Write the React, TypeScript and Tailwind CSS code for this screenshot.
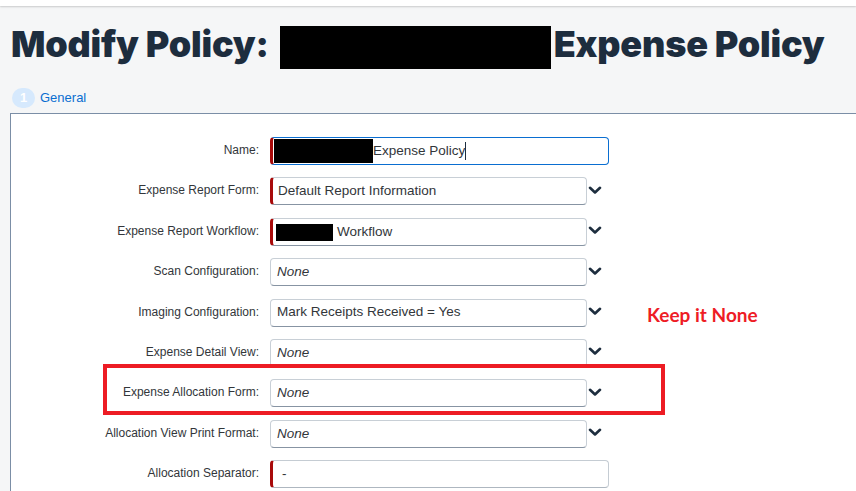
import React from "react";

const Chevron = () => (
  <svg width="14" height="9" viewBox="0 0 14 9" className="shrink-0 -mt-[2px]">
    <polyline points="2,1.8 7,6.5 12,1.8" fill="none" stroke="#1d2d3e" strokeWidth="2.6" strokeLinecap="round" strokeLinejoin="round" />
  </svg>
);

type Row = {
  label: string;
  kind: "name" | "select" | "text";
  required?: boolean;
  content: React.ReactNode;
};

const italicNone = <span className="italic">None</span>;

const rows: Row[] = [
  {
    label: "Name:",
    kind: "name",
    required: true,
    content: (
      <span className="flex items-center">
        <span className="inline-block w-[99px] h-[24px] bg-black" />
        <span>Expense Policy</span>
        <span className="inline-block w-px h-[18px] bg-[#1d2d3e]" />
      </span>
    ),
  },
  { label: "Expense Report Form:", kind: "select", required: true, content: "Default Report Information" },
  {
    label: "Expense Report Workflow:",
    kind: "select",
    required: true,
    content: (
      <span className="flex items-center">
        <span className="inline-block w-[57px] h-[17px] bg-black -ml-[2px] mt-[1px]" />
        <span className="ml-[4px]">Workflow</span>
      </span>
    ),
  },
  { label: "Scan Configuration:", kind: "select", content: italicNone },
  { label: "Imaging Configuration:", kind: "select", content: "Mark Receipts Received = Yes" },
  { label: "Expense Detail View:", kind: "select", content: italicNone },
  { label: "Expense Allocation Form:", kind: "select", content: italicNone },
  { label: "Allocation View Print Format:", kind: "select", content: italicNone },
  { label: "Allocation Separator:", kind: "text", required: true, content: <span className="ml-[4px]">-</span> },
];

function Field({ row }: { row: Row }) {
  const base = "h-[28px] flex items-center rounded-[4px] border text-[13.5px] text-[#32363a] bg-white";
  const req = row.required ? "border-l-[3px] border-l-[#a80a0a]" : "";
  if (row.kind === "name") {
    return (
      <div className={`${base} w-[339px] border-[#0a6ed1] ${req} pl-[1px]`}>{row.content}</div>
    );
  }
  if (row.kind === "text") {
    return (
      <div className={`${base} w-[339px] border-[#c5ccd3] border-b-[#aeb7c0] ${req} pl-[5px]`}>{row.content}</div>
    );
  }
  return (
    <div className="flex items-center gap-[1px]">
      <div
        className={`${base} w-[317px] border-[#c8cfd6] border-b-[#8794a3] ${req} ${row.required ? "pl-[5px]" : "pl-[6px]"}`}
      >
        {row.content}
      </div>
      <Chevron />
    </div>
  );
}

export default function App() {
  return (
    <div
      className="relative w-[856px] h-[491px] overflow-hidden bg-[#f5f6f7]"
      style={{ fontFamily: '"Liberation Sans", Arial, sans-serif' }}
    >
      <div className="h-[6px] bg-white shadow-[0_1px_2px_rgba(0,0,0,0.18)]" />

      <h1
        className="mt-[16px] ml-[11px] flex items-start text-[36px] leading-[44px] font-black text-[#1d2d3e] whitespace-nowrap tracking-[-0.2px]"
        style={{ fontFamily: 'Inter, "Liberation Sans", sans-serif' }}
      >
        <span>Modify Policy:</span>
        <span className="inline-block w-[271px] h-[43px] bg-black mt-[3.5px] ml-[11px] mr-[3px]" />
        <span>Expense Policy</span>
      </h1>

      <div className="mt-[19.5px] ml-[12px] h-[20px] flex items-center gap-[5px]">
        <div className="w-[23px] h-[20px] rounded-full bg-[#d6e9fd] flex items-center justify-center text-white text-[13px] font-bold">
          1
        </div>
        <span className="text-[13px] text-[#0a6ed1]">General</span>
      </div>

      <div className="mt-[5px] ml-[10px] h-[400px] bg-white border-l border-t border-[#7b8ea6] pt-[23px]">
        <div className="flex flex-col gap-[12.4px]">
          {rows.map((r) => (
            <div key={r.label} className="flex items-start h-[28px]">
              <div className="w-[248px] text-right text-[12px] text-[#32363a] pt-[4px] whitespace-nowrap">
                {r.label}
              </div>
              <div className="ml-[11px]">
                <Field row={r} />
              </div>
            </div>
          ))}
        </div>
      </div>

      <div className="absolute left-[103px] top-[364px] w-[562px] h-[51px] border-[4px] border-[#ed1c24]" />

      <div
        className="absolute left-[647px] top-[305px] text-[19px] leading-[19px] font-bold text-[#ee1c25] whitespace-nowrap"
        style={{ fontFamily: 'Lato, "Open Sans", sans-serif' }}
      >
        Keep it None
      </div>
    </div>
  );
}
